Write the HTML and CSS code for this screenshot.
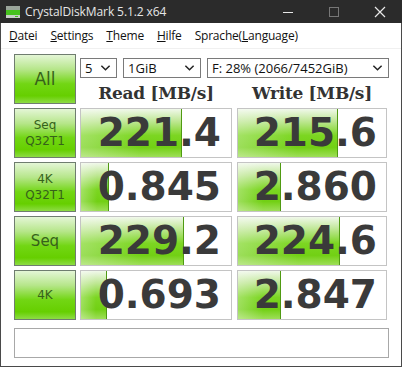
FILE: index.html
```html
<!DOCTYPE html>
<html lang="de">
<head>
  <meta charset="UTF-8" />
  <meta name="viewport" content="width=device-width, initial-scale=1.0"/>
  <title>CrystalDiskMark 5.1.2 x64</title>
  <link rel="stylesheet" href="styles.css">
</head>
<body>
  <div class="window">

    <div class="titlebar">
      <svg class="app-icon" width="16" height="16" viewBox="0 0 16 16">
        <rect x="1" y="2" width="14" height="4" fill="#9aa59a"/>
        <rect x="1" y="6" width="14" height="5" fill="#46c21e"/>
        <rect x="1" y="11" width="14" height="3" fill="#c8d0c8"/>
        <rect x="10" y="12" width="3" height="1" fill="#46c21e"/>
      </svg>
      <span class="title">CrystalDiskMark 5.1.2 x64</span>
      <div class="controls">
        <svg width="12" height="12" viewBox="0 0 12 12"><line x1="1" y1="6.5" x2="11" y2="6.5" stroke="#e8e8e8" stroke-width="1"/></svg>
        <svg width="12" height="12" viewBox="0 0 12 12"><rect x="1.5" y="1.5" width="9" height="9" fill="none" stroke="#777" stroke-width="1"/></svg>
        <svg width="12" height="12" viewBox="0 0 12 12"><path d="M1 1 L11 11 M11 1 L1 11" stroke="#e8e8e8" stroke-width="1.2"/></svg>
      </div>
    </div>

    <div class="menubar">
      <span><u>D</u>atei</span>
      <span><u>S</u>ettings</span>
      <span><u>T</u>heme</span>
      <span><u>H</u>ilfe</span>
      <span>Sprache(<u>L</u>anguage)</span>
    </div>

    <div class="content">
      <div class="top">
        <div class="label-btn big">All</div>
        <div class="top-right">
          <div class="selects">
            <div class="select s-count">5<svg viewBox="0 0 12 8"><polyline points="1.5,1.5 6,6 10.5,1.5" fill="none" stroke="#222" stroke-width="1.6"/></svg></div>
            <div class="select s-size">1GiB<svg viewBox="0 0 12 8"><polyline points="1.5,1.5 6,6 10.5,1.5" fill="none" stroke="#222" stroke-width="1.6"/></svg></div>
            <div class="select s-drive">F: 28% (2066/7452GiB)<svg viewBox="0 0 12 8"><polyline points="1.5,1.5 6,6 10.5,1.5" fill="none" stroke="#222" stroke-width="1.6"/></svg></div>
          </div>
          <div class="heads">
            <div class="head read">Read [MB/s]</div>
            <div class="head write">Write [MB/s]</div>
          </div>
        </div>
      </div>

      <div class="row">
        <div class="label-btn">Seq<br>Q32T1</div>
        <div class="cell read"><div class="bar" style="width: 100px"></div><span class="num">221.4</span></div>
        <div class="cell write"><div class="bar" style="width: 99px"></div><span class="num">215.6</span></div>
      </div>

      <div class="row">
        <div class="label-btn">4K<br>Q32T1</div>
        <div class="cell read"><div class="bar" style="width: 27px"></div><span class="num">0.845</span></div>
        <div class="cell write"><div class="bar" style="width: 42px"></div><span class="num">2.860</span></div>
      </div>

      <div class="row">
        <div class="label-btn seq">Seq</div>
        <div class="cell read"><div class="bar" style="width: 102px"></div><span class="num">229.2</span></div>
        <div class="cell write"><div class="bar" style="width: 101px"></div><span class="num">224.6</span></div>
      </div>

      <div class="row">
        <div class="label-btn">4K</div>
        <div class="cell read"><div class="bar" style="width: 25px"></div><span class="num">0.693</span></div>
        <div class="cell write"><div class="bar" style="width: 42px"></div><span class="num">2.847</span></div>
      </div>

      <div class="comment"></div>
    </div>

  </div>
</body>
</html>
```

FILE: styles.css
```css
body {
  margin: 0;
  padding: 0;
  font-family: Tahoma, "DejaVu Sans", sans-serif;
  background: #fff;
}

.window {
  width: 402px;
  height: 367px;
  box-sizing: border-box;
  border: 1px solid #4a4a4a;
  border-top: none;
  background: #fff;
  display: flex;
  flex-direction: column;
}

.titlebar {
  height: 23px;
  background: #2b2b2b;
  display: flex;
  align-items: center;
  margin: 0 -1px;
  padding-left: 5px;
}

.app-icon {
  margin-right: 4px;
}

.title {
  color: #e6e6e6;
  font-family: "Open Sans", "Noto Sans", sans-serif;
  font-size: 12px;
  letter-spacing: -0.1px;
}

.controls {
  margin-left: auto;
  display: flex;
  gap: 34px;
  padding-right: 16px;
}

.menubar {
  height: 25px;
  display: flex;
  align-items: center;
  gap: 13px;
  padding-left: 8px;
  font-family: "Open Sans", "Noto Sans", sans-serif;
  font-size: 12px;
  letter-spacing: -0.2px;
  color: #111;
  border-bottom: 1px solid #f0f0f0;
}

.content {
  padding: 5px 0 0 13px;
}

.top {
  display: flex;
  height: 50px;
}

.top-right {
  margin-left: 4px;
  display: flex;
  flex-direction: column;
}

.selects {
  display: flex;
  gap: 6px;
  margin-top: 4px;
}

.select {
  height: 20px;
  box-sizing: border-box;
  border: 1px solid #7a7a7a;
  background: #fff;
  display: flex;
  align-items: center;
  padding-left: 4px;
  font-family: "Open Sans", "Noto Sans", sans-serif;
  font-size: 13px;
  color: #111;
}

.select svg {
  width: 11px;
  height: 8px;
  margin-left: auto;
  margin-right: 5px;
}

.s-count { width: 37px; }
.s-size { width: 78px; }
.s-drive { width: 182px; }

.heads {
  display: flex;
  margin-top: 3px;
}

.head {
  font-family: "DejaVu Serif", serif;
  font-weight: bold;
  font-size: 17px;
  letter-spacing: -0.3px;
  color: #333;
  text-align: center;
  line-height: 24px;
}

.head.read { width: 152px; margin-right: 5px; }
.head.write { width: 150px; }

.label-btn {
  width: 62px;
  height: 50px;
  box-sizing: border-box;
  border: 1px solid #6f7d6f;
  background: linear-gradient(to bottom, #e4f6d6 0%, #b6e68a 30%, #72d614 60%, #66cf00 85%, #8ddc44 100%);
  color: #36621a;
  font-size: 12px;
  line-height: 16px;
  text-align: center;
  display: flex;
  align-items: center;
  justify-content: center;
}

.label-btn.big {
  font-size: 17px;
}

.label-btn.seq {
  font-size: 15px;
}

.row {
  display: flex;
  height: 50px;
  margin-top: 4px;
}

.cell {
  position: relative;
  height: 50px;
  box-sizing: border-box;
  border: 1px solid #c4c4c4;
  background: #fff;
  display: flex;
  align-items: center;
  justify-content: flex-end;
  overflow: hidden;
}

.cell.read {
  width: 152px;
  margin-left: 4px;
  padding-right: 10px;
}

.cell.write {
  width: 150px;
  margin-left: 5px;
  padding-right: 9px;
}

.bar {
  position: absolute;
  left: 0;
  top: 0;
  bottom: 0;
  border-right: 1px solid #4f9a12;
  background:
    linear-gradient(to right, rgba(255, 255, 255, 0.3), rgba(255, 255, 255, 0) 60%),
    linear-gradient(to bottom, #f0f8ea 0%, #bfe795 25%, #7cd622 55%, #72d014 80%, #9ede58 100%);
}

.num {
  position: relative;
  font-family: "DejaVu Sans", sans-serif;
  font-weight: bold;
  font-size: 39px;
  color: #3a3a3a;
  line-height: 48px;
}

.comment {
  width: 375px;
  height: 30px;
  box-sizing: border-box;
  border: 1px solid #a8a8a8;
  background: #fff;
  margin-top: 8px;
}
```
